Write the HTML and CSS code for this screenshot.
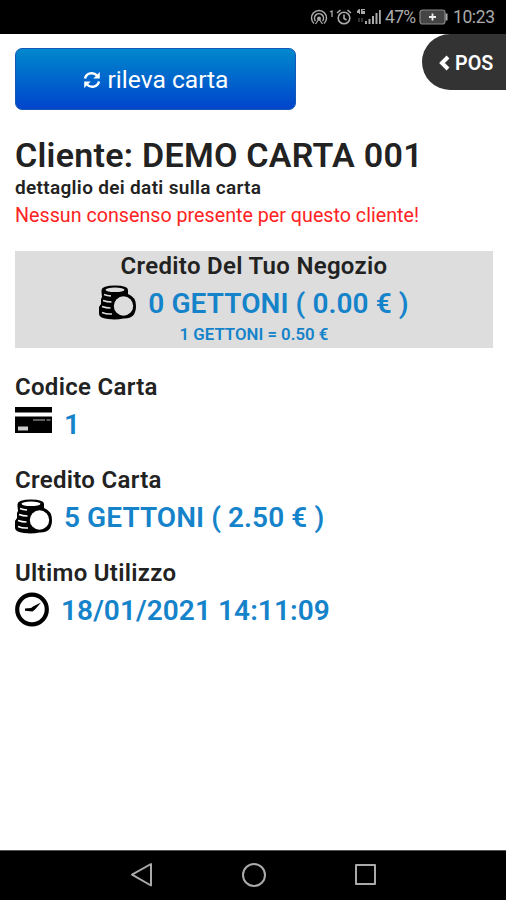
FILE: index.html
```html
<!DOCTYPE html>
<html lang="it">
<head>
  <meta charset="UTF-8" />
  <meta name="viewport" content="width=device-width, initial-scale=1.0"/>
  <title>Dettaglio carta</title>
  <link rel="stylesheet" href="styles.css">
</head>
<body>
  <svg class="defs" width="0" height="0">
    <symbol id="coins" viewBox="0 0 37 35">
      <path d="M2.500 7V5Q3 0.500 16 0.500T29 5V9Q37 12 37 21Q37 34 24.500 33.500Q17 35 9 34Q0 33 0 29V22L2 19V14L3 12Z" fill="#000"/>
      <ellipse cx="16" cy="4.800" rx="9.500" ry="2.300" fill="var(--hole)"/>
      <circle cx="24.500" cy="21" r="9.700" fill="var(--hole)"/>
      <path d="M5 9.500Q8 10.800 12 11M4 15.500Q8 17 12.500 17M3 21.500Q7 23 11.500 23M3 27.500Q8 29.500 13 29" fill="none" stroke="var(--hole)" stroke-width="1.500"/>
    </symbol>
  </svg>

  <!-- Barra di stato -->
  <div class="status-bar">
    <svg class="hotspot" width="26" height="18" viewBox="0 0 26 18" fill="none" stroke="#aaa" stroke-width="1.5">
      <path d="M4 15.500A7.500 7.500 0 1 1 14 15.500M5.500 13A4.500 4.500 0 1 1 12.500 13"/>
      <circle cx="9" cy="10.500" r="1.200" fill="#aaa"/>
      <path d="M9 11L5.500 16M9 11L12.500 16M20 4L22 3V9" stroke-width="1.3"/>
    </svg>
    <svg class="alarm" width="16" height="18" viewBox="0 0 16 18" fill="none" stroke="#aaa" stroke-width="1.6">
      <circle cx="8" cy="10" r="5.800"/>
      <path d="M8 6.500V10.500L10.500 12M1 5L4.500 2M15 5L11.500 2"/>
    </svg>
    <svg class="signal" width="26" height="18" viewBox="0 0 26 18" fill="#aaa">
      <path d="M9 13h2v3H9zM12.500 11h2v5h-2zM16 8h2v8h-2zM19.500 5h2v11h-2zM23 2h1.800v14H23z"/>
      <path d="M1 3L3 1H4V6H3V5H1ZM5 1h4v1H6.500v1H9v3H5z"/>
      <path d="M2 10h2v4H2zM5 10h2v4H5z" fill="#333"/>
    </svg>
    <span class="percent">47%</span>
    <svg class="battery" width="30" height="16" viewBox="0 0 30 16">
      <rect x="1" y="1" width="25" height="14" rx="2.500" fill="#444" stroke="#888" stroke-width="1.200"/>
      <path d="M27.500 4.500V11.500" stroke="#aaa" stroke-width="2"/>
      <path d="M13.500 4.500V11.500M10 8H17" stroke="#eee" stroke-width="1.800"/>
    </svg>
    <span class="clock">10:23</span>
  </div>

  <!-- Contenuto principale -->
  <main>
    <div class="toolbar">
      <button class="read-card">
        <svg width="18" height="18" viewBox="0 0 18 18">
          <path d="M2 7.500A7 7 0 0 1 14 4.500M16 10.500A7 7 0 0 1 4 13.500" fill="none" stroke="#fff" stroke-width="2.500"/>
          <path d="M16.800 1V7.500H10.300ZM1.200 17V10.500H7.700Z" fill="#fff"/>
        </svg>
        <span>rileva carta</span>
      </button>
      <button class="pos">
        <svg width="12" height="16" viewBox="0 0 12 16"><path d="M10 2L4 8L10 14" fill="none" stroke="#fff" stroke-width="4"/></svg>
        <span>POS</span>
      </button>
    </div>

    <h1>Cliente: DEMO CARTA 001</h1>
    <p class="subtitle">dettaglio dei dati sulla carta</p>
    <p class="warning">Nessun consenso presente per questo cliente!</p>

    <section class="shop-credit">
      <h2>Credito Del Tuo Negozio</h2>
      <div class="value">
        <svg width="37" height="35"><use href="#coins"/></svg>
        <span>0 GETTONI ( 0.00 € )</span>
      </div>
      <p class="rate">1 GETTONI = 0.50 €</p>
    </section>

    <section class="detail">
      <h2>Codice Carta</h2>
      <div class="value">
        <svg width="37" height="35" viewBox="0 0 37 35">
          <path d="M0 1H37V6.500H0ZM0 10.500H37V27H0Z"/>
          <path d="M18 14H30M31.500 14H35.500" stroke="#bbb" stroke-width="1.200"/>
          <rect x="3" y="20.500" width="10" height="4" fill="#ccc"/>
        </svg>
        <span>1</span>
      </div>
    </section>

    <section class="detail">
      <h2>Credito Carta</h2>
      <div class="value">
        <svg width="37" height="35"><use href="#coins"/></svg>
        <span>5 GETTONI ( 2.50 € )</span>
      </div>
    </section>

    <section class="detail">
      <h2>Ultimo Utilizzo</h2>
      <div class="value">
        <svg width="34" height="35" viewBox="0 0 34 35">
          <circle cx="17" cy="17.500" r="14.800" fill="none" stroke="#000" stroke-width="4.200"/>
          <path d="M26 10.500L20 17.500L17.500 19.500L10 18.800V16.500L16 16L18 14.500Z"/>
        </svg>
        <span>18/01/2021 14:11:09</span>
      </div>
    </section>
  </main>

  <!-- Barra di navigazione -->
  <nav class="nav-bar">
    <svg width="24" height="26" viewBox="0 0 24 26"><path d="M21 2V23.500L2 12.700Z"/></svg>
    <svg width="26" height="26" viewBox="0 0 26 26"><circle cx="13" cy="13" r="11"/></svg>
    <svg width="24" height="26" viewBox="0 0 24 26"><rect x="2" y="3" width="19" height="19"/></svg>
  </nav>
</body>
</html>
```

FILE: styles.css
```css
* {
  margin: 0;
  padding: 0;
  box-sizing: border-box;
}

body {
  display: flex;
  flex-direction: column;
  height: 100vh;
  background-color: #fff;
  color: #222;
  font-family: Roboto, sans-serif;
  overflow: hidden;
  --hole: #fff;
}

.defs {
  position: absolute;
}

.status-bar {
  height: 34px;
  background-color: #000;
  color: #aaa;
  display: flex;
  align-items: center;
  padding-left: 310px;
  font-size: 17.5px;
  white-space: nowrap;
}

.status-bar svg {
  flex: none;
}

.signal {
  margin-left: 4px;
}

.percent {
  width: 34px;
  margin-left: 3px;
  letter-spacing: -0.7px;
}

.clock {
  margin-left: 4px;
  letter-spacing: -0.4px;
}

main {
  flex: 1;
  padding-left: 15px;
}

.toolbar {
  display: flex;
  justify-content: space-between;
  align-items: flex-start;
  height: 99px;
}

button {
  border: none;
  color: #fff;
  font-family: inherit;
  display: flex;
  align-items: center;
}

.read-card {
  width: 281px;
  height: 62px;
  margin-top: 14px;
  padding-top: 1px;
  justify-content: center;
  gap: 7px;
  background: linear-gradient(#0088cc, #0044cc);
  border: 1px solid #1559b8;
  border-radius: 7px;
  font-size: 24.6px;
}

.pos {
  width: 84px;
  height: 56px;
  padding: 2px 0 0 16px;
  gap: 5px;
  background-color: #333;
  border-radius: 28px 0 0 28px;
  font-size: 19.7px;
  font-weight: 600;
}

h1 {
  font-size: 34px;
  font-weight: 600;
  letter-spacing: 0.27px;
  line-height: 45px;
  white-space: nowrap;
}

.subtitle {
  font-size: 19px;
  font-weight: 600;
  letter-spacing: 0.32px;
  line-height: 20px;
}

.warning {
  color: #f22;
  font-size: 19.7px;
  line-height: 36px;
}

h2 {
  font-size: 24px;
  font-weight: 600;
  letter-spacing: 0.3px;
  line-height: 30px;
}

.value {
  display: flex;
  align-items: center;
  height: 42px;
  gap: 12px;
  color: #1583ca;
  font-size: 28px;
  font-weight: 600;
  letter-spacing: 0.07px;
  white-space: nowrap;
}

.value svg {
  flex: none;
}

.value span {
  padding-top: 2px;
}

.shop-credit {
  --hole: #ddd;
  width: 478px;
  height: 97px;
  margin: 17px 0 24px;
  background-color: #ddd;
  text-align: center;
}

.shop-credit .value {
  justify-content: center;
}

.rate {
  color: #1583ca;
  font-size: 16.8px;
  font-weight: 600;
  line-height: 23px;
}

.detail {
  height: 93px;
}

.nav-bar {
  height: 50px;
  background-color: #000;
  border-top: 1px solid #555;
  display: flex;
  align-items: center;
  justify-content: center;
  gap: 87px;
  padding: 0 0 2px 2px;
}

.nav-bar svg {
  fill: none;
  stroke: #aaa;
  stroke-width: 2;
  stroke-linejoin: round;
}
```
